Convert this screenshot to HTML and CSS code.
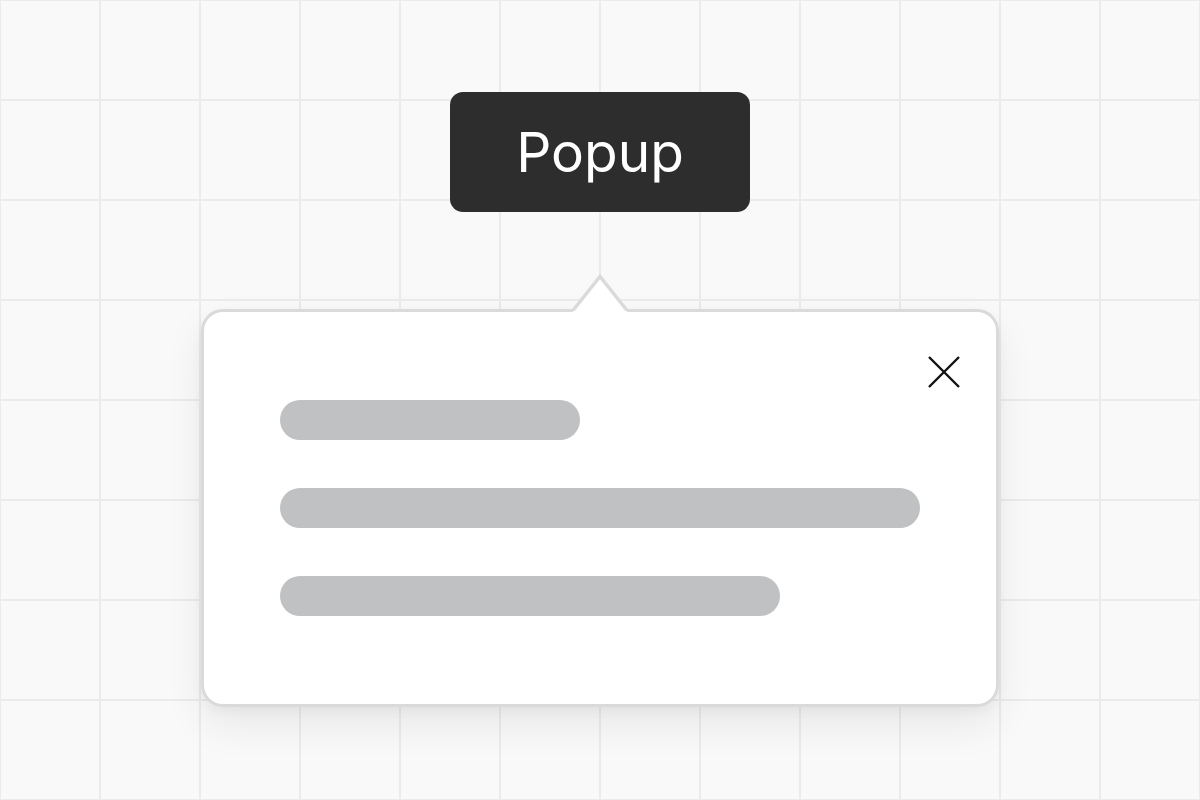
FILE: index.html
```html
<!DOCTYPE html>
<html>
<head>
<meta charset="utf-8">
<link rel="stylesheet" href="styles.css">
</head>
<body>
<main class="stage">
  <button class="trigger">Popup</button>
  <section class="popup">
    <svg class="popup-arrow" width="60" height="40" viewBox="0 0 60 40">
      <polygon points="3,36.5 30,2.5 57,36.5 57,40 3,40" fill="#ffffff"/>
      <polyline points="3,36.5 30,2.5 57,36.5" fill="none" stroke="#dadada" stroke-width="3.4" stroke-linejoin="miter"/>
    </svg>
    <button class="close" aria-label="Close">
      <svg width="32" height="32" viewBox="0 0 32 32">
        <path d="M1 1 L31 31 M31 1 L1 31" stroke="#111" stroke-width="2.4" fill="none"/>
      </svg>
    </button>
    <div class="lines">
      <div class="line line-short"></div>
      <div class="line line-long"></div>
      <div class="line line-mid"></div>
    </div>
  </section>
</main>
</body>
</html>
```
FILE: styles.css
```css
html, body {
  margin: 0;
  padding: 0;
}
body {
  width: 1200px;
  height: 800px;
  overflow: hidden;
  background-color: #f9f9f9;
  background-image:
    linear-gradient(to right, #ebebeb 2px, transparent 2px),
    linear-gradient(to bottom, #ebebeb 2px, transparent 2px);
  background-size: 100px 100px;
  background-position: 99px 99px;
  font-family: Inter, "Noto Sans", sans-serif;
}
.stage {
  display: flex;
  flex-direction: column;
  align-items: center;
  padding-top: 92px;
}
.trigger {
  width: 300px;
  height: 120px;
  border: none;
  border-radius: 13px;
  background: #2d2d2d;
  color: #ffffff;
  font-family: Inter, "Noto Sans", sans-serif;
  font-size: 55px;
  font-weight: 400;
  padding: 0;
  margin: 0;
  line-height: 1;
}
.popup {
  position: relative;
  margin-top: 97px;
  width: 798px;
  height: 398px;
  box-sizing: border-box;
  border: 3px solid #dadada;
  border-radius: 22px;
  background: #ffffff;
  box-shadow: 0 18px 40px rgba(0, 0, 0, 0.07), 0 4px 12px rgba(0, 0, 0, 0.04);
  padding: 88px 76px 0 76px;
}
.popup-arrow {
  position: absolute;
  top: -38px;
  left: 50%;
  transform: translateX(-50%);
  display: block;
}
.close {
  position: absolute;
  top: 44px;
  right: 36px;
  width: 32px;
  height: 32px;
  padding: 0;
  border: none;
  background: transparent;
  display: flex;
}
.lines {
  display: flex;
  flex-direction: column;
  gap: 48px;
}
.line {
  height: 40px;
  border-radius: 20px;
  background: #c0c1c3;
}
.line-short { width: 300px; }
.line-long { width: 640px; }
.line-mid { width: 500px; }
```
